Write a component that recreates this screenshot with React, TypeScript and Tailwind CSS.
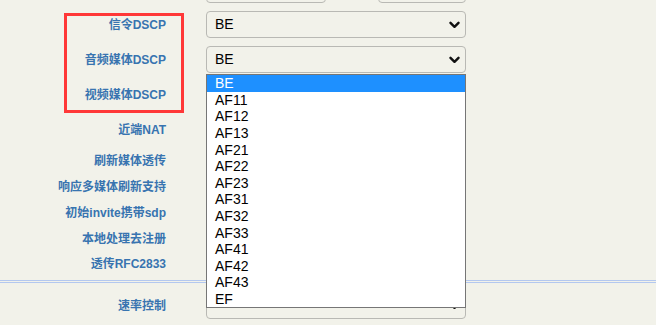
const labelCls =
  "w-[166px] shrink-0 text-right text-[12px] font-bold text-[#3874b0] whitespace-nowrap";

const options = [
  "BE",
  "AF11",
  "AF12",
  "AF13",
  "AF21",
  "AF22",
  "AF23",
  "AF31",
  "AF32",
  "AF33",
  "AF41",
  "AF42",
  "AF43",
  "EF",
];

function Chevron() {
  return (
    <svg width="11" height="8" viewBox="0 0 11 8" className="shrink-0">
      <path
        d="M1.5 1.8 L5.5 5.8 L9.5 1.8"
        fill="none"
        stroke="#111"
        strokeWidth="2.4"
        strokeLinecap="round"
        strokeLinejoin="round"
      />
    </svg>
  );
}

function SelectBox({ value }: { value: string }) {
  return (
    <div className="ml-[40px] flex h-[27px] w-[260px] items-center justify-between rounded-[4px] border border-[#b9b9b4] pl-[8px] pr-[5px] text-[14px] text-black">
      <span>{value}</span>
      <Chevron />
    </div>
  );
}

function Row({
  label,
  h,
  children,
}: {
  label: string;
  h: string;
  children?: React.ReactNode;
}) {
  return (
    <div className={`flex items-center ${h}`}>
      <div className={labelCls}>{label}</div>
      {children}
    </div>
  );
}

export default function App() {
  return (
    <div
      className="relative h-[325px] w-[656px] overflow-hidden bg-[#f2f2ea]"
      style={{ fontFamily: '"Liberation Sans", "Noto Sans CJK SC", sans-serif' }}
    >
      {/* previous row, mostly scrolled out */}
      <div className="-mt-[28px] flex h-[35px] items-center">
        <div className="w-[166px] shrink-0" />
        <div className="ml-[40px] h-[27px] w-[120px] rounded-[4px] border border-[#b9b9b4]" />
        <div className="ml-[52px] h-[27px] w-[88px] rounded-[4px] border border-[#b9b9b4]" />
      </div>

      <Row label="信令DSCP" h="h-[35px]">
        <SelectBox value="BE" />
      </Row>
      <Row label="音频媒体DSCP" h="h-[35px]">
        <SelectBox value="BE" />
      </Row>
      {/* covered by the open list */}
      <Row label="视频媒体DSCP" h="h-[35px]">
        <SelectBox value="" />
      </Row>
      <Row label="近端NAT" h="h-[36px]" />
      <Row label="刷新媒体透传" h="h-[26px]" />
      <Row label="响应多媒体刷新支持" h="h-[26px]" />
      <Row label="初始invite携带sdp" h="h-[26px]" />
      <Row label="本地处理去注册" h="h-[25px]" />
      <Row label="透传RFC2833" h="h-[26px]" />

      <div className="mt-[3px] h-[3px] border-y border-[#b4c8ef]" />

      <Row label="速率控制" h="h-[45px]">
        <SelectBox value="" />
      </Row>

      {/* annotation box */}
      <div className="absolute left-[64px] top-[13px] h-[100px] w-[120px] border-[3px] border-[#ff3838]" />

      {/* open dropdown list */}
      <div className="absolute left-[206px] top-[74px] z-10 w-[260px] border border-[#767676] bg-white text-[14px]">
        {options.map((o, i) => (
          <div
            key={o}
            className={`flex h-[16.6px] items-center pl-[8px] leading-none ${
              i === 0 ? "bg-[#1e90ff] text-white" : "text-black"
            }`}
          >
            {o}
          </div>
        ))}
      </div>
    </div>
  );
}
